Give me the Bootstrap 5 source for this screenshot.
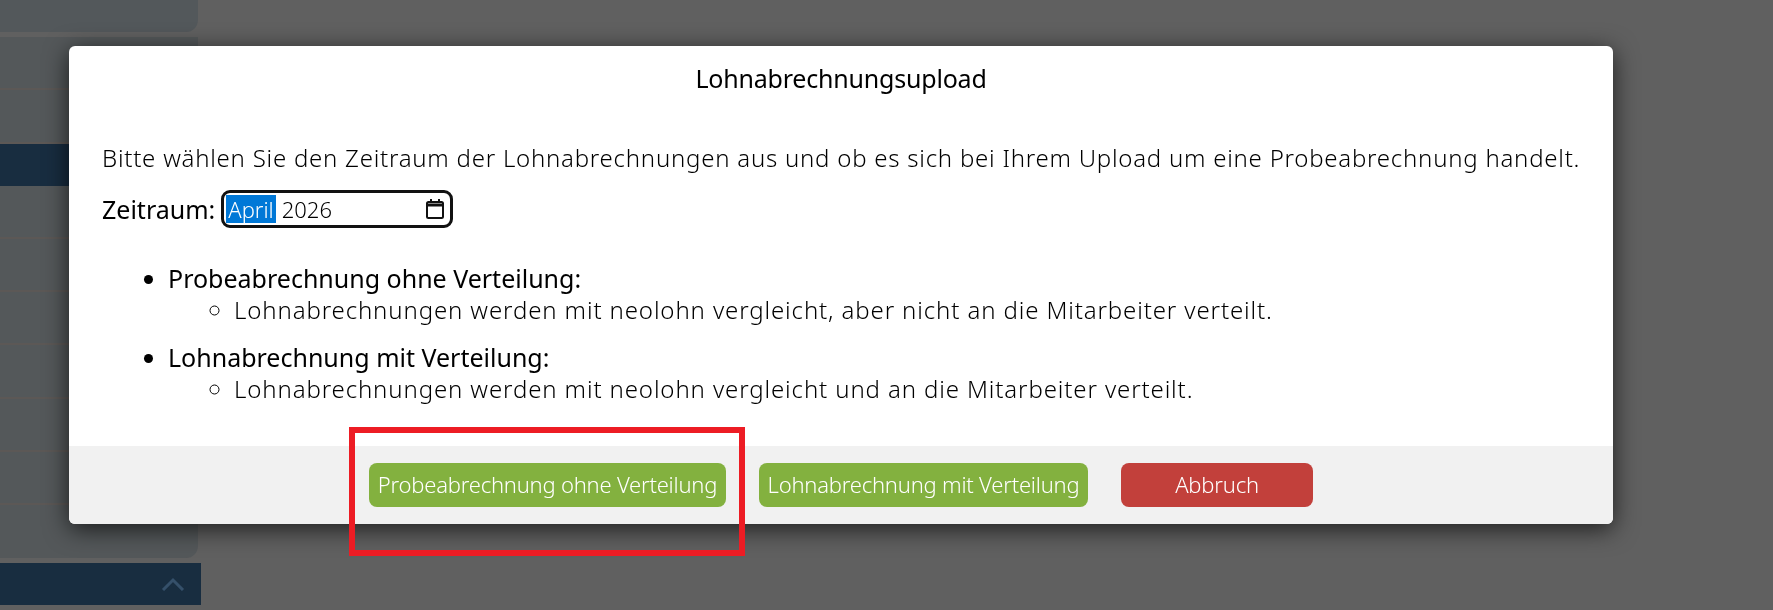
<!DOCTYPE html>
<html lang="en">
<head>
  <meta charset="UTF-8">
  <title>Lohnabrechnungsupload</title>
  <link href="https://cdn.jsdelivr.net/npm/bootstrap@5.3.0/dist/css/bootstrap.min.css" rel="stylesheet">
  <style>
    html, body { height: 610px; overflow: hidden; }
    body { background: #606060; font-family: "Noto Sans", "Open Sans", sans-serif; font-weight: 300; color: #000; }
    .side-menu { width: 201px; height: 610px; }
    .side-top { height: 32px; width: 198px; background: #53585b; border-bottom-right-radius: 12px; margin-bottom: 5px; }
    .side-list { width: 198px; background: #54585a; }
    .side-row { height: 53.3px; border-bottom: 2px solid #5c5856; }
    .side-active { height: 42px; background: #182d40; }
    .side-rest { height: 372px; width: 198px; background: #54585a; border-bottom-right-radius: 12px; margin-bottom: 5px; }
    .side-foot { height: 42px; background: #182d40; }
    .side-foot svg { width: 24px; height: 14px; }
    .upload-dialog { position: fixed; left: 69px; top: 46px; width: 1544px; height: 478px; background: #fff; border-radius: 6px; box-shadow: 0 5px 24px rgba(0,0,0,.7); overflow: hidden; }
    .upload-title { font-size: 25px; font-weight: 400; height: 60px; padding-top: 13px; letter-spacing: -.2px; line-height: 38px; }
    .upload-body { padding: 0 33px; font-size: 24px; line-height: 32px; flex-grow: 1; }
    .upload-intro { margin: 0; padding-top: 36px; letter-spacing: .76px; white-space: nowrap; }
    .period-row { margin-top: 16px; height: 38px; }
    .period-label { font-size: 25px; font-weight: 400; }
    .period-input { width: 232px; height: 38px; border: 3px solid #111; border-radius: 9px; background: #fff; margin-left: 6px; padding: 0 6px 0 2px; font-size: 22px; line-height: 28px; }
    .period-month { background: #0078d7; color: #fff; padding: 0 2px; height: 28px; margin-right: 6px; }
    .period-input svg { width: 18px; height: 20px; }
    .rules { margin: 34px 0 0; padding-left: 66px; }
    .rules > li { margin-bottom: 15px; }
    .rules b { font-weight: 400; font-size: 25px; }
    .rules ul { margin-top: -1px; padding-left: 66px; list-style-type: circle; letter-spacing: .88px; }
    .upload-foot { height: 78px; background: #f1f1f1; padding-top: 17px; padding-left: 300px; gap: 33px; }
    .upload-btn { height: 44px; border: 0; border-radius: 8px; color: #fff; font-size: 22px; font-weight: 300; padding: 0 0 2px; letter-spacing: -.22px; }
    .btn-test { width: 357px; background: #83b13f; }
    .btn-real { width: 329px; background: #83b13f; }
    .btn-cancel { width: 192px; background: #c2403b; }
    .red-mark { position: fixed; left: 349px; top: 427px; width: 396px; height: 129px; border: 6px solid #ed1c24; pointer-events: none; }
  </style>
</head>
<body>
  <div class="side-menu d-flex flex-column">
    <div class="side-top"></div>
    <div class="side-list flex-shrink-0">
      <div class="side-row"></div>
      <div class="side-row"></div>
    </div>
    <div class="side-active"></div>
    <div class="side-rest">
      <div class="side-row"></div>
      <div class="side-row"></div>
      <div class="side-row"></div>
      <div class="side-row"></div>
      <div class="side-row"></div>
      <div class="side-row"></div>
    </div>
    <div class="side-foot d-flex align-items-center justify-content-end pe-3">
      <svg viewBox="0 0 24 14" fill="none" stroke="#35506a" stroke-width="3"><path d="M2 13 12 3l10 10"/></svg>
    </div>
  </div>

  <div class="upload-dialog d-flex flex-column">
    <div class="upload-title text-center">Lohnabrechnungsupload</div>
    <div class="upload-body">
      <p class="upload-intro">Bitte wählen Sie den Zeitraum der Lohnabrechnungen aus und ob es sich bei Ihrem Upload um eine Probeabrechnung handelt.</p>
      <div class="period-row d-flex align-items-center">
        <span class="period-label">Zeitraum:</span>
        <div class="period-input d-flex align-items-center">
          <span class="period-month">April</span>
          <span class="flex-grow-1">2026</span>
          <svg viewBox="0 0 18 20" fill="none" stroke="#111" stroke-width="2"><rect x="1" y="3" width="16" height="16" rx="1.5"/><path d="M1 6h16" stroke-width="3"/><path d="M5 0v4M13 0v4"/></svg>
        </div>
      </div>
      <ul class="rules">
        <li><b>Probeabrechnung ohne Verteilung:</b>
          <ul><li>Lohnabrechnungen werden mit neolohn vergleicht, aber nicht an die Mitarbeiter verteilt.</li></ul>
        </li>
        <li><b>Lohnabrechnung mit Verteilung:</b>
          <ul><li>Lohnabrechnungen werden mit neolohn vergleicht und an die Mitarbeiter verteilt.</li></ul>
        </li>
      </ul>
    </div>
    <div class="upload-foot d-flex">
      <button class="btn upload-btn btn-test">Probeabrechnung ohne Verteilung</button>
      <button class="btn upload-btn btn-real">Lohnabrechnung mit Verteilung</button>
      <button class="btn upload-btn btn-cancel">Abbruch</button>
    </div>
  </div>
  <div class="red-mark"></div>

  <script src="https://cdn.jsdelivr.net/npm/bootstrap@5.3.0/dist/js/bootstrap.bundle.min.js"></script>
</body>
</html>
